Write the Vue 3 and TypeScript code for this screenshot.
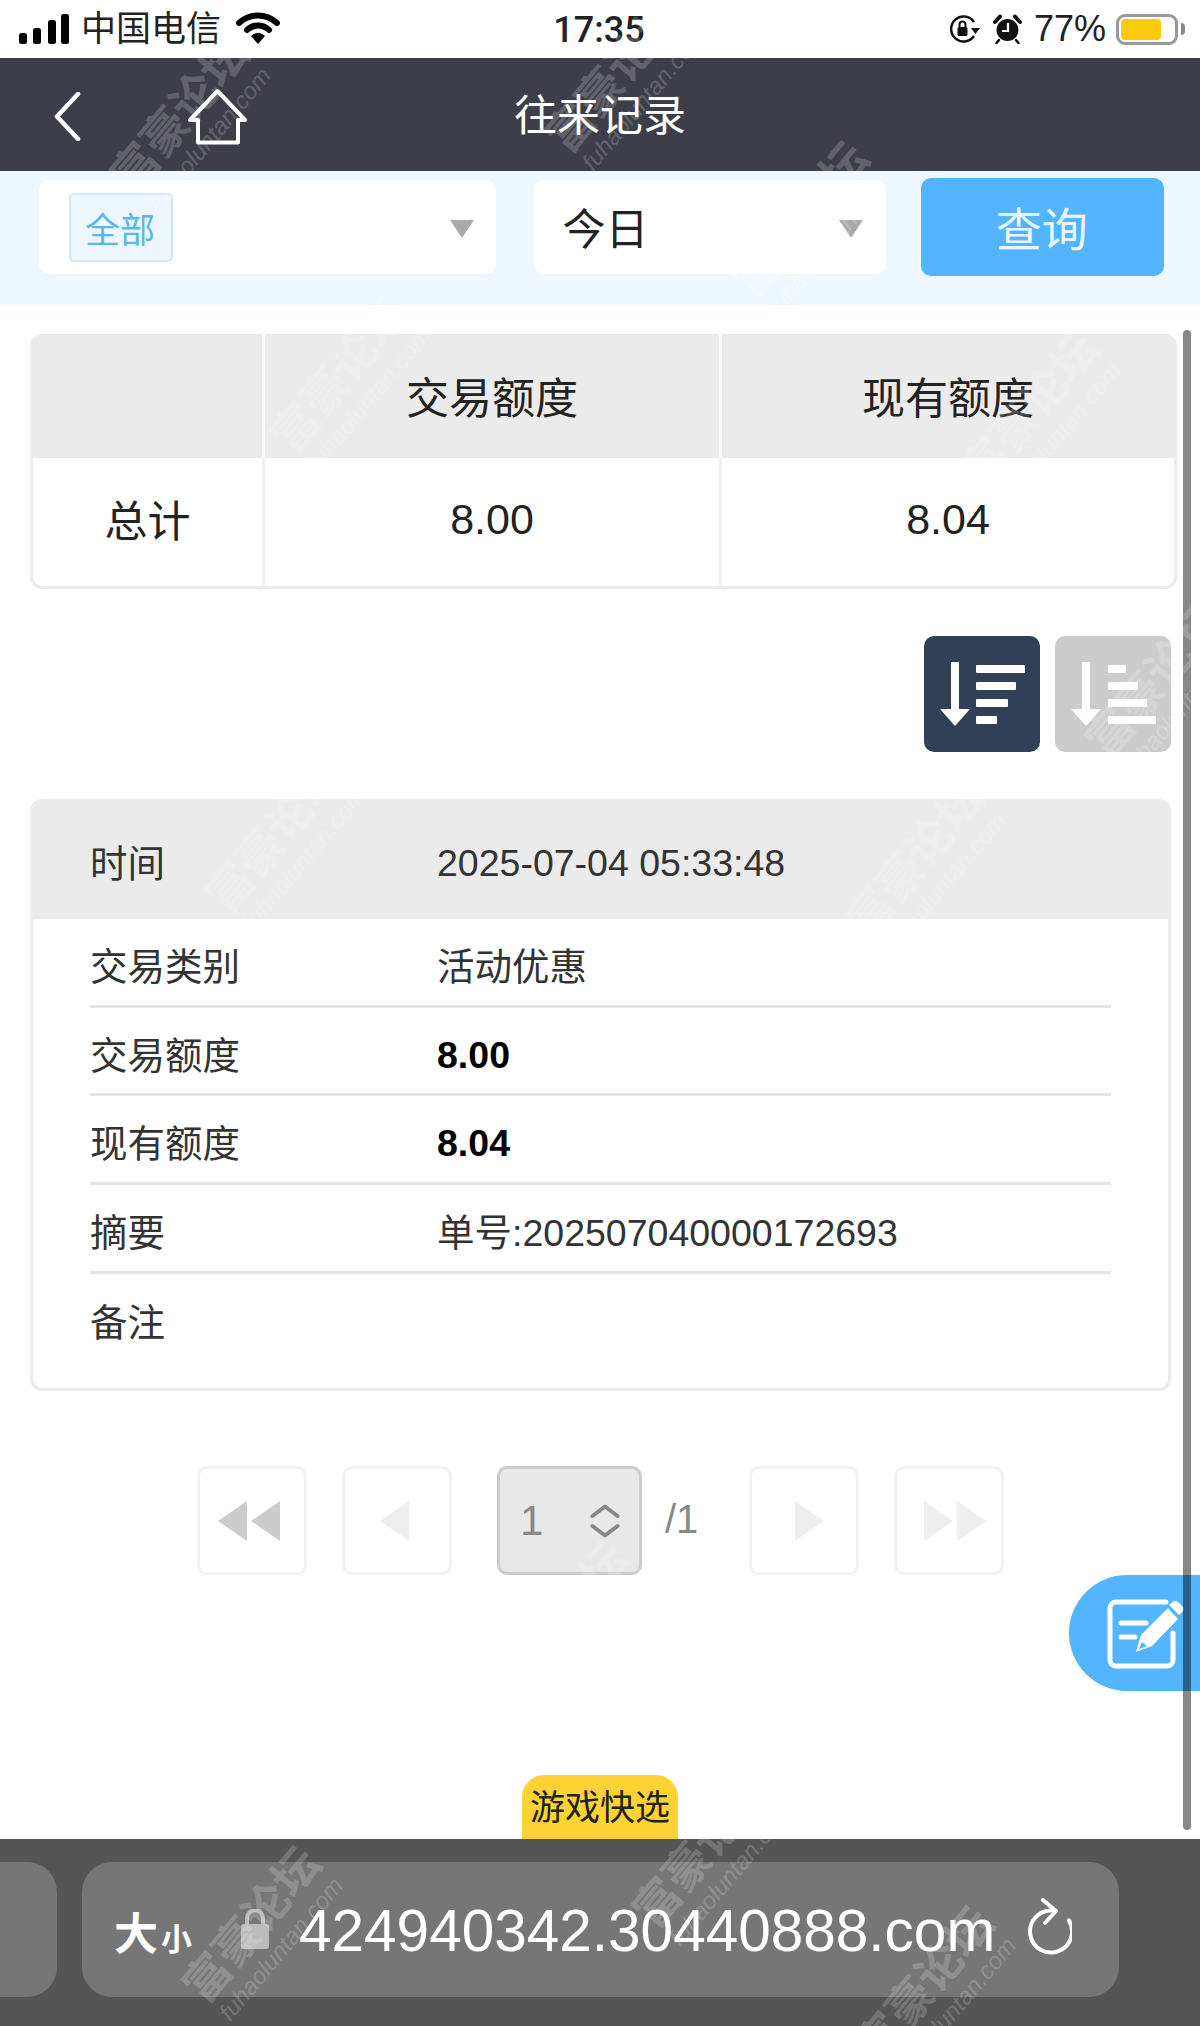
<script setup lang="ts">
interface Mark { x: number; y: number }
const marks: Mark[] = [
  { x: 190, y: 125 }, { x: 625, y: 85 }, { x: 810, y: 230 }, { x: 350, y: 385 },
  { x: 1040, y: 420 }, { x: 1165, y: 690 }, { x: 285, y: 845 }, { x: 925, y: 870 },
  { x: 262, y: 1935 }, { x: 712, y: 1860 }, { x: 935, y: 1995 }, { x: 570, y: 1630 }
]
const rows = [
  { label: '交易类别', value: '活动优惠', bold: false, num: false },
  { label: '交易额度', value: '8.00', bold: true, num: true },
  { label: '现有额度', value: '8.04', bold: true, num: true },
  { label: '摘要', value: '单号:202507040000172693', bold: false, num: false },
  { label: '备注', value: '', bold: false, num: false }
]
const descBars = [49, 40, 32, 21]
const ascBars = [18, 30, 39, 48]
</script>

<template>
  <div class="page">
    <div class="status">
      <div class="st-left">
        <svg class="signal" width="50" height="30" viewBox="0 0 50 30">
          <rect x="0" y="19" width="8" height="11" rx="2.5" />
          <rect x="14" y="14" width="8" height="16" rx="2.5" />
          <rect x="29" y="6" width="8" height="24" rx="2.5" />
          <rect x="42" y="0" width="8" height="30" rx="2.5" />
        </svg>
        <span class="carrier">中国电信</span>
        <svg class="wifi" width="44" height="32" viewBox="0 0 44 32">
          <path d="M3 11 C14 1 30 1 41 11" fill="none" stroke="#000" stroke-width="6" stroke-linecap="round" />
          <path d="M11 18 C17 12 27 12 33 18" fill="none" stroke="#000" stroke-width="6" stroke-linecap="round" />
          <path d="M15 24 C19 20 25 20 29 24 L22 32 Z" fill="#000" />
        </svg>
      </div>
      <div class="time">17:35</div>
      <div class="st-right">
        <svg width="32" height="28" viewBox="0 0 32 28">
          <path d="M26 7 A12.5 12.5 0 1 0 26 21" fill="none" stroke="#111" stroke-width="2.5" />
          <path d="M23 13 L32 13 L27.5 19 Z" fill="#111" />
          <rect x="9.5" y="12" width="10" height="9" rx="1.5" fill="#111" />
          <path d="M11.5 12 V9.5 A3 3 0 0 1 17.5 9.5 V12" fill="none" stroke="#111" stroke-width="2" />
        </svg>
        <svg class="alarm" width="29" height="30" viewBox="0 0 29 30">
          <circle cx="14.5" cy="16" r="11" fill="#111" />
          <path d="M2 8 L7 2.5 M27 8 L22 2.5" stroke="#111" stroke-width="4" stroke-linecap="round" />
          <path d="M6 26 L3.5 29 M23 26 L25.5 29" stroke="#111" stroke-width="2.5" stroke-linecap="round" />
          <path d="M15 9 V17 H9" fill="none" stroke="#fff" stroke-width="2.2" />
        </svg>
        <span class="pct">77%</span>
        <div class="battery"><div class="fill"></div></div>
        <div class="nub"></div>
      </div>
    </div>

    <header class="bar">
      <svg class="back" width="27" height="49" viewBox="0 0 27 49">
        <path d="M24 2 L3 24.5 L24 47" fill="none" stroke="#fff" stroke-width="4.5" stroke-linecap="round" stroke-linejoin="round" />
      </svg>
      <svg class="home" width="60" height="58" viewBox="0 0 60 58">
        <path d="M29.5 3 L57 32 H50 V54.500 H10 V32 H2 Z" fill="none" stroke="#fff" stroke-width="4" stroke-linejoin="round" />
      </svg>
      <h1 class="title">往来记录</h1>
    </header>

    <section class="filter">
      <div class="select first">
        <span class="chip">全部</span>
        <i class="caret"></i>
      </div>
      <div class="select second">
        <span class="today">今日</span>
        <i class="caret"></i>
      </div>
      <button class="query">查询</button>
    </section>

    <main class="main">
      <div class="summary">
        <div class="cell head"></div>
        <div class="cell head">交易额度</div>
        <div class="cell head">现有额度</div>
        <div class="cell">总计</div>
        <div class="cell">8.00</div>
        <div class="cell">8.04</div>
      </div>

      <div class="sort">
        <div class="sort-btn dark">
          <svg width="116" height="116" viewBox="0 0 116 116">
            <rect x="27" y="26" width="8" height="50" fill="#fff" />
            <path d="M16 73 H46 L31 90 Z" fill="#fff" />
            <rect v-for="(w, i) in descBars" :key="i" x="52" :y="29 + i * 17" :width="w" height="8" rx="1" fill="#fff" />
          </svg>
        </div>
        <div class="sort-btn light">
          <svg width="116" height="116" viewBox="0 0 116 116">
            <rect x="27" y="26" width="8" height="50" fill="#fff" />
            <path d="M16 73 H46 L31 90 Z" fill="#fff" />
            <rect v-for="(w, i) in ascBars" :key="i" x="53" :y="29 + i * 17" :width="w" height="8" rx="1" fill="#fff" />
          </svg>
        </div>
      </div>

      <div class="card">
        <div class="card-head">
          <span class="lbl">时间</span>
          <span class="val num">2025-07-04 05:33:48</span>
        </div>
        <div class="card-body">
          <div v-for="r in rows" :key="r.label" class="row">
            <span class="lbl">{{ r.label }}</span>
            <span class="val" :class="{ strong: r.bold, num: r.num }">{{ r.value }}</span>
          </div>
        </div>
      </div>

      <nav class="pager">
        <div class="pg back-side">
          <svg width="62" height="40" viewBox="0 0 62 40"><path d="M29 0 V40 L0 20 Z M62 0 V40 L33 20 Z" fill="#ccc" /></svg>
        </div>
        <div class="pg back-side">
          <svg width="29" height="40" viewBox="0 0 29 40"><path d="M29 0 V40 L0 20 Z" fill="#eee" /></svg>
        </div>
        <div class="page-input">
          <span>1</span>
          <svg width="30" height="34" viewBox="0 0 30 34">
            <path d="M2.500 12 L15 2.500 L27.500 12 M2.500 22 L15 31.500 L27.500 22" fill="none" stroke="#888" stroke-width="4" stroke-linecap="round" stroke-linejoin="round" />
          </svg>
        </div>
        <span class="total">/1</span>
        <div class="pg fwd-side">
          <svg width="29" height="40" viewBox="0 0 29 40"><path d="M0 0 V40 L29 20 Z" fill="#eee" /></svg>
        </div>
        <div class="pg fwd-side">
          <svg width="62" height="40" viewBox="0 0 62 40"><path d="M0 0 V40 L29 20 Z M33 0 V40 L62 20 Z" fill="#eee" /></svg>
        </div>
      </nav>

      <div class="quick">游戏快选</div>
    </main>

    <footer class="foot">
      <div class="tabs-pill"></div>
      <div class="url-pill">
        <span class="aa"><b>大</b><small>小</small></span>
        <svg class="lock" width="28" height="40" viewBox="0 0 28 40">
          <rect x="0" y="15" width="28" height="25" rx="3" fill="#bbb" />
          <path d="M6 16 V9 A8 8 0 0 1 22 9 V16" fill="none" stroke="#bbb" stroke-width="4" />
        </svg>
        <span class="url">424940342.30440888.com</span>
        <svg class="reload" width="48" height="58" viewBox="0 0 48 58">
          <path d="M18 13 A21 21 0 1 0 38 15" fill="none" stroke="#fff" stroke-width="4" stroke-linecap="round" transform="rotate(24 24 35)" />
          <path d="M19 2 L32 13 L21 25" fill="none" stroke="#fff" stroke-width="4" stroke-linecap="round" stroke-linejoin="round" />
        </svg>
      </div>
    </footer>

    <div class="fab">
      <svg width="80" height="72" viewBox="0 0 80 72">
        <path d="M60 3 H10 A6 6 0 0 0 4 9 V61 A6 6 0 0 0 10 67 H61 A6 6 0 0 0 67 61 V34" fill="none" stroke="#fff" stroke-width="5" stroke-linecap="round" />
        <path d="M15 24 H40 M15 38 H29" stroke="#fff" stroke-width="5" stroke-linecap="round" />
        <path d="M30 53 L35 36 L62 9 L72 20 L46 47 Z" fill="#fff" />
        <path d="M63 6 L68 2 Q70 1 72 3 L77 8 Q78.500 10 77 12 L73 16 Z" fill="#fff" />
        <path d="M33 50 L36 43 L41 47 Z" fill="#53b4ff" />
      </svg>
    </div>

    <div class="scroll"></div>

    <div class="marks" aria-hidden="true">
      <div v-for="(m, i) in marks" :key="i" class="mark" :style="{ left: m.x + 'px', top: m.y + 'px' }">
        <span class="m-cn">富豪论坛</span>
        <span class="m-en">fuhaoluntan.com</span>
      </div>
    </div>
  </div>
</template>

<style>
html, body { margin: 0; padding: 0; background: #fff; }
</style>

<style scoped>
.page {
  position: relative;
  width: 1200px;
  height: 2026px;
  overflow: hidden;
  display: flex;
  flex-direction: column;
  background: #fff;
  font-family: "Liberation Sans", "Noto Sans CJK SC", sans-serif;
  color: #222;
}

/* status bar */
.status {
  height: 58px;
  flex: none;
  display: grid;
  grid-template-columns: 1fr auto 1fr;
  align-items: center;
  padding: 0 15px 0 19px;
  box-sizing: border-box;
  background: #fff;
  color: #111;
}
.st-left { display: flex; align-items: center; }
.signal { fill: #000; margin-right: 12px; }
.carrier { font-size: 35px; line-height: 58px; color: #222; }
.wifi { margin-left: 15px; margin-top: -2px; }
.time { font-family: Roboto, "Liberation Sans", sans-serif; font-weight: 500; font-size: 36px; color: #222; padding: 2px 6px 0 0; }
.st-right { display: flex; align-items: center; justify-content: flex-end; }
.alarm { margin-left: 13px; }
.pct { font-size: 36px; margin-left: 12px; color: #222; }
.battery {
  width: 62px;
  height: 31px;
  margin-left: 10px;
  border: 3px solid #999;
  border-radius: 9px;
  box-sizing: border-box;
  padding: 2px;
}
.fill { width: 40px; height: 100%; background: #fdc90c; border-radius: 4px; }
.nub { width: 4px; height: 12px; margin-left: 3px; background: #888; border-radius: 0 4px 4px 0; }

/* title bar */
.bar {
  height: 113px;
  flex: none;
  background: #3e3e4a;
  display: flex;
  align-items: center;
  position: relative;
  padding-left: 54px;
}
.back { margin-top: 4px; }
.home { margin-left: 107px; margin-top: 4px; }
.title {
  position: absolute;
  left: 0;
  right: 0;
  top: 2px;
  margin: 0;
  text-align: center;
  font-size: 43px;
  font-weight: 400;
  color: #fff;
  line-height: 113px;
}

/* filter */
.filter {
  height: 134px;
  flex: none;
  background: #eff7fe;
  box-sizing: border-box;
  padding: 7px 36px 29px 39px;
  display: flex;
  align-items: center;
}
.select {
  height: 94px;
  background: #fff;
  border-radius: 10px;
  display: flex;
  align-items: center;
  justify-content: space-between;
  box-sizing: border-box;
}
.first { width: 457px; padding: 0 22px 0 30px; }
.second { width: 353px; margin-left: 38px; padding: 0 23px 0 29px; }
.chip {
  width: 104px;
  height: 69px;
  box-sizing: border-box;
  background: #eef6fd;
  border: 2px solid #d8e6f4;
  border-radius: 5px;
  color: #5ab7ea;
  font-size: 35px;
  display: flex;
  align-items: center;
  justify-content: center;
  padding-right: 2px;
}
.today { font-size: 43px; color: #222; padding-bottom: 3px; }
.caret {
  width: 0;
  height: 0;
  margin-top: 3px;
  border-left: 12px solid transparent;
  border-right: 12px solid transparent;
  border-top: 18px solid #aaa;
}
.query {
  width: 243px;
  height: 98px;
  margin-left: 35px;
  border: none;
  border-radius: 10px;
  background: #53b4ff;
  color: #e8f5ff;
  font-family: inherit;
  font-size: 46px;
  padding: 0 2px 2px 0;
}

/* main */
.main {
  flex: 1;
  display: flex;
  flex-direction: column;
  padding: 29px 0 0 30px;
  min-height: 0;
}
.summary {
  width: 1147px;
  height: 255px;
  box-sizing: border-box;
  border: 3px solid #ebebeb;
  border-top: none;
  border-radius: 12px;
  overflow: hidden;
  display: grid;
  grid-template-columns: 229px 457px 1fr;
  grid-template-rows: 124px 1fr;
  font-size: 43px;
  color: #222;
}
.cell {
  display: flex;
  align-items: center;
  justify-content: center;
  border-left: 3px solid #f0f0f0;
  padding-bottom: 5px;
  box-sizing: border-box;
}
.cell:nth-child(3n + 1) { border-left: none; }
.cell:nth-child(4) { padding-bottom: 9px; }
.cell.head { background: #ebebeb; border-left-color: #fff; padding-bottom: 2px; }

.sort {
  width: 1141px;
  margin-top: 47px;
  display: flex;
  justify-content: flex-end;
  gap: 15px;
}
.sort-btn { width: 116px; height: 116px; border-radius: 10px; }
.sort-btn svg { display: block; filter: blur(0.6px); }
.dark { background: #2f4057; }
.light { background: #ccc; }

.card {
  width: 1141px;
  margin-top: 47px;
  height: 592px;
  box-sizing: border-box;
  border: 3px solid #ebebeb;
  border-top: none;
  border-radius: 12px;
  overflow: hidden;
  font-size: 37.5px;
  color: #333;
}
.card-head {
  height: 120px;
  background: #ebebeb;
  display: flex;
  align-items: center;
  padding: 2px 0 0 57px;
  box-sizing: border-box;
}
.card-body { padding: 0 57px; }
.row {
  height: 88.700px;
  box-sizing: border-box;
  border-bottom: 3px solid #e5e5e5;
  display: flex;
  align-items: center;
  padding-top: 3px;
}
.row:last-child { border-bottom: none; }
.lbl { width: 347px; flex: none; }
.val { color: #333; }
.val.num { padding-top: 6px; }
.strong { font-weight: 700; color: #000; }

.pager {
  margin-top: 75px;
  margin-left: 167px;
  display: flex;
  align-items: center;
}
.pg {
  width: 110px;
  height: 109px;
  box-sizing: border-box;
  border: 3px solid #f2f2f2;
  border-radius: 10px;
  margin-right: 35px;
  display: flex;
  align-items: center;
  justify-content: center;
}
.pg svg { display: block; }
.back-side svg { margin-right: 6px; }
.fwd-side svg { margin-left: 11px; }
.page-input {
  width: 145px;
  height: 109px;
  margin-left: 10px;
  box-sizing: border-box;
  background: #e8e8e8;
  border: 3px solid #ccc;
  border-radius: 10px;
  display: flex;
  align-items: center;
  justify-content: space-between;
  padding: 0 19px 0 20px;
  color: #888;
  font-size: 42px;
}
.total {
  width: 84px;
  margin-left: 23px;
  font-size: 40px;
  color: #888;
  margin-top: -2px;
}
.quick {
  margin-top: auto;
  margin-left: 492px;
  width: 156px;
  height: 64px;
  box-sizing: border-box;
  padding-bottom: 6px;
  background: #fdd235;
  border-radius: 22px 22px 0 0;
  font-size: 35px;
  color: #222;
  display: flex;
  align-items: center;
  justify-content: center;
  white-space: nowrap;
}

/* browser bar */
.foot {
  height: 187px;
  flex: none;
  background: #555;
  box-sizing: border-box;
  padding: 23px 0 29px 0;
  display: flex;
  gap: 25px;
}
.tabs-pill {
  width: 57px;
  background: #767676;
  border-radius: 0 30px 30px 0;
}
.url-pill {
  width: 1037px;
  background: #767676;
  border-radius: 30px;
  display: flex;
  align-items: center;
  box-sizing: border-box;
  padding: 2px 0 0 32px;
  color: #fff;
  position: relative;
}
.aa { display: flex; align-items: baseline; width: 127px; flex: none; }
.aa b { font-size: 44px; font-weight: 700; }
.aa small { font-size: 31px; margin-left: 3px; font-weight: 700; }
.lock { position: absolute; left: 159px; top: 47px; }
.url { font-size: 58.5px; margin-left: 58px; white-space: nowrap; }
.reload { margin-left: 29px; margin-top: -8px; flex: none; }

/* floats */
.fab {
  position: absolute;
  left: 1069px;
  top: 1575px;
  width: 131px;
  height: 116px;
  background: #53b4ff;
  border-radius: 58px 0 0 58px;
}
.fab svg { position: absolute; left: 37px; top: 24px; }
.scroll {
  position: absolute;
  left: 1183px;
  top: 330px;
  width: 8px;
  height: 1500px;
  border-radius: 4px;
  background: rgba(0, 0, 0, 0.47);
}
.marks { position: absolute; inset: 0; pointer-events: none; overflow: hidden; }
.mark {
  position: absolute;
  width: 240px;
  margin: -40px 0 0 -120px;
  transform: rotate(-50deg);
  color: rgba(255, 255, 255, 0.2);
  display: flex;
  flex-direction: column;
  align-items: center;
  white-space: nowrap;
}
.m-cn { font-size: 46px; font-weight: 700; line-height: 50px; }
.m-en { font-size: 24px; font-style: italic; line-height: 26px; }
</style>
